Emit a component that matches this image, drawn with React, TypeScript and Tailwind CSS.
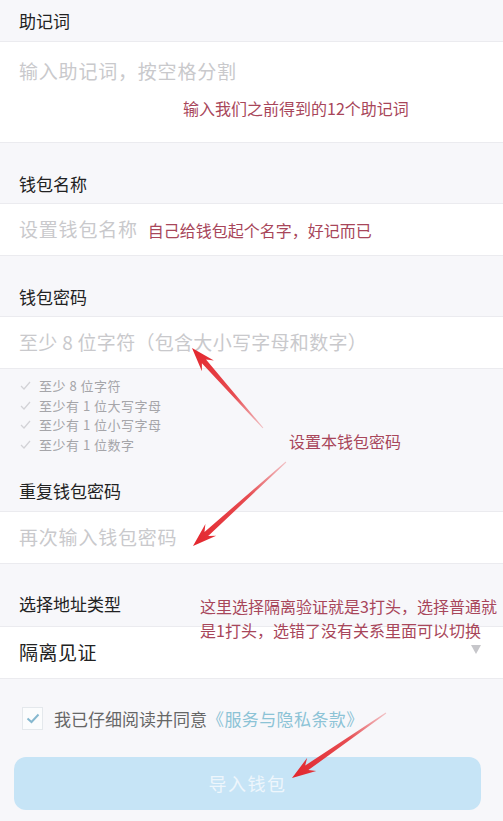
import React from "react";

const font = { fontFamily: '"Noto Sans CJK SC", "Noto Sans", sans-serif' };

type Pt = [number, number];

function arrowPoints(tail: Pt, tip: Pt) {
  const dx = tip[0] - tail[0];
  const dy = tip[1] - tail[1];
  const len = Math.hypot(dx, dy);
  const ux = dx / len;
  const uy = dy / len;
  const nx = -uy;
  const ny = ux;
  const headLen = 24;
  const neck: Pt = [tip[0] - ux * headLen, tip[1] - uy * headLen];
  const notch: Pt = [tip[0] - ux * (headLen - 6), tip[1] - uy * (headLen - 6)];
  const p = (x: number, y: number) => `${x.toFixed(1)},${y.toFixed(1)}`;
  return [
    p(tail[0] + nx * 0.5, tail[1] + ny * 0.5),
    p(notch[0] + nx * 2.8, notch[1] + ny * 2.8),
    p(neck[0] + nx * 8, neck[1] + ny * 8),
    p(tip[0], tip[1]),
    p(neck[0] - nx * 8, neck[1] - ny * 8),
    p(notch[0] - nx * 2.8, notch[1] - ny * 2.8),
    p(tail[0] - nx * 0.5, tail[1] - ny * 0.5),
  ].join(" ");
}

const arrows: { tail: Pt; tip: Pt }[] = [
  { tail: [263, 428], tip: [192, 348] },
  { tail: [286, 462], tip: [193, 546] },
  { tail: [386, 713], tip: [292, 778] },
];

function Header({ children, tall = true }: { children: React.ReactNode; tall?: boolean }) {
  return (
    <div
      className={`flex pl-[19px] text-[17px] text-[#222] ${
        tall ? "h-[60px] items-end pb-[7px]" : "h-[41px] items-center"
      }`}
    >
      {children}
    </div>
  );
}

function Note({ children, className = "" }: { children: React.ReactNode; className?: string }) {
  return <span className={`text-[16px] text-[#a8465a] leading-[24px] ${className}`}>{children}</span>;
}

function InputRow({ children, className = "tracking-[0.8px]" }: { children: React.ReactNode; className?: string }) {
  return (
    <div
      className={`h-[53px] bg-white border-y border-[#ebebef] flex items-center pl-[19px] text-[19px] text-[#c9c9cc] ${className}`}
    >
      {children}
    </div>
  );
}

function Check() {
  return (
    <svg width="11" height="9" viewBox="0 0 11 9" className="mr-[8px]">
      <path d="M1 5 L4 8 L10 1" fill="none" stroke="#d2d2d6" strokeWidth="1.2" />
    </svg>
  );
}

export default function App() {
  const rules = ["至少 8 位字符", "至少有 1 位大写字母", "至少有 1 位小写字母", "至少有 1 位数字"];
  return (
    <div className="relative w-[503px] h-[821px] bg-[#f7f7fa] overflow-hidden" style={font}>
      <Header tall={false}>助记词</Header>
      <div className="h-[102px] bg-white border-y border-[#ebebef] pl-[19px] pt-[15px]">
        <div className="text-[19px] tracking-[0.8px] text-[#c9c9cc] leading-[28px]">输入助记词，按空格分割</div>
        <div className="pl-[164px] mt-[11px]">
          <Note>输入我们之前得到的12个助记词</Note>
        </div>
      </div>

      <Header>钱包名称</Header>
      <InputRow>
        <span>设置钱包名称</span>
        <Note className="ml-[10px] tracking-[0px]">自己给钱包起个名字，好记而已</Note>
      </InputRow>

      <Header>钱包密码</Header>
      <InputRow className="tracking-[0.3px]">至少 8 位字符（包含大小写字母和数字）</InputRow>

      <div className="pl-[20px] pt-[7px] relative">
        {rules.map((r) => (
          <div key={r} className="flex items-center h-[19.5px] text-[13px] tracking-[0.5px] text-[#a5a5a9]">
            <Check />
            {r}
          </div>
        ))}
        <div className="absolute left-[289px] top-[60px]">
          <Note>设置本钱包密码</Note>
        </div>
      </div>
      <div className="flex h-[57px] items-end pb-[8px] pl-[19px] text-[17px] text-[#222]">重复钱包密码</div>
      <InputRow>再次输入钱包密码</InputRow>

      <div className="flex h-[62px] pl-[19px] text-[17px] text-[#222]">
        <span className="self-end pb-[10px] w-[181px] shrink-0">选择地址类型</span>
        <div className="pt-[30px] leading-[24px] text-[16px] text-[#a8465a] whitespace-nowrap">
          这里选择隔离验证就是3打头，选择普通就
          <br />
          是1打头，选错了没有关系里面可以切换
        </div>
      </div>
      <div className="h-[53px] bg-white border-y border-[#ebebef] flex items-center justify-between pl-[19px] pr-[22px] text-[19px] tracking-[0.5px] text-[#222]">
        <span>隔离见证</span>
        <svg width="10" height="9" viewBox="0 0 10 9" className="-mt-[6px]">
          <path d="M0 0 H10 L5 9 Z" fill="#c6c6ca" />
        </svg>
      </div>

      <div className="flex items-center pl-[22px] mt-[27px] h-[25px]">
        <div className="w-[21px] h-[23px] border border-[#e4e8ec] bg-[#fbfcfd] flex items-center justify-center mr-[11px]">
          <svg width="14" height="11" viewBox="0 0 14 11">
            <path d="M1.5 5.5 L5.5 9 L12.5 1.5" fill="none" stroke="#86b8cf" strokeWidth="2" />
          </svg>
        </div>
        <span className="text-[17px] text-[#666]">我已仔细阅读并同意</span>
        <span className="text-[17px] tracking-[0.4px] text-[#8cc3d6]">《服务与隐私条款》</span>
      </div>

      <div className="mx-[14px] w-[467px] mt-[26px] h-[53px] rounded-[12px] bg-[#c6e4f6] flex items-center justify-center text-[18px] text-[#eef6fc] tracking-[1.5px]">
        导入钱包
      </div>

      <svg className="absolute inset-0 pointer-events-none" width="503" height="821">
        <defs>
          {arrows.map((a, i) => (
            <linearGradient
              key={i}
              id={`g${i}`}
              gradientUnits="userSpaceOnUse"
              x1={a.tail[0]}
              y1={a.tail[1]}
              x2={a.tip[0]}
              y2={a.tip[1]}
            >
              <stop offset="0" stopColor="#e5484d" stopOpacity="0.3" />
              <stop offset="0.4" stopColor="#e53a3f" stopOpacity="0.9" />
              <stop offset="1" stopColor="#e3262d" />
            </linearGradient>
          ))}
        </defs>
        {arrows.map((a, i) => (
          <polygon key={i} points={arrowPoints(a.tail, a.tip)} fill={`url(#g${i})`} />
        ))}
      </svg>
    </div>
  );
}
